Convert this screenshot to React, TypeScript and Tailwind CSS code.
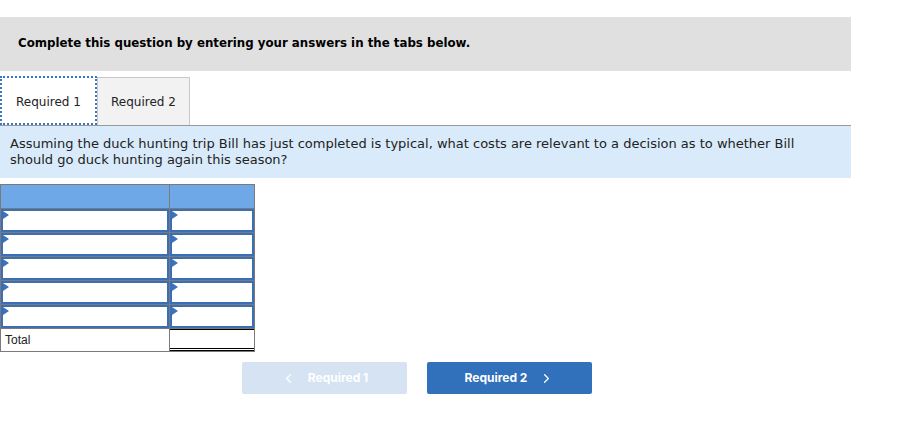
import { ChevronLeft, ChevronRight } from 'lucide-react';

const verdana = "font-['Verdana','DejaVu_Sans',sans-serif]";

function Marker() {
  return (
    <span className="absolute left-0 top-0 h-0 w-0 border-y-[4px] border-l-[6px] border-y-transparent border-l-[#3a72bd]" />
  );
}

function InputCell({ wide }: { wide?: boolean }) {
  return (
    <td className={`border border-[#7a7a7a] p-0 ${wide ? 'w-[169px]' : 'w-[85px]'}`}>
      <div className="relative h-[23px] border-2 border-[#3a6fb8] bg-white">
        <Marker />
      </div>
    </td>
  );
}

export default function App() {
  return (
    <div className="h-[445px] w-[916px] bg-white pt-[17px]">
      <div className="flex h-[54px] w-[851px] items-center bg-[#e0e0e0] pl-[18px]">
        <span className={`${verdana} text-[11.8px] font-bold text-black`}>
          Complete this question by entering your answers in the tabs below.
        </span>
      </div>

      <div className="mt-[6px] flex h-[48px] items-end">
        <div className={`${verdana} z-10 flex h-[49px] w-[97px] items-center justify-center border-2 border-dotted border-[#3b76c4] bg-white pt-[2px] text-[12px] text-[#222]`}>
          Required 1
        </div>
        <div className={`${verdana} flex h-[48px] w-[93px] items-center justify-center border border-b-0 border-[#c8c8c8] bg-[#f2f2f2] text-[12px] text-[#222]`}>
          Required 2
        </div>
      </div>

      <div className={`${verdana} w-[851px] border-t border-[#9a9a9a] bg-[#d9ebfa] px-[10px] pb-[10px] pt-[10px] text-[13px] leading-[16px] text-[#222]`}>
        Assuming the duck hunting trip Bill has just completed is typical, what costs are relevant to a decision as to whether Bill should go duck hunting again this season?
      </div>

      <table className="mt-[6px] border-collapse">
        <tbody>
          <tr className="h-[24px]">
            <td className="w-[169px] border border-[#7a7a7a] bg-[#6fa8e6] p-0" />
            <td className="w-[85px] border border-[#7a7a7a] bg-[#6fa8e6] p-0" />
          </tr>
          {[0, 1, 2, 3, 4].map((i) => (
            <tr key={i}>
              <InputCell wide />
              <InputCell />
            </tr>
          ))}
          <tr>
            <td className="h-[23px] border border-[#7a7a7a] px-[4px] py-0 font-['Liberation_Sans',Arial,sans-serif] text-[12px] text-[#222]">
              Total
            </td>
            <td className="border border-[#7a7a7a] p-0">
              <div className="h-[22px] border-t border-b-[3px] border-double border-black bg-white" />
            </td>
          </tr>
        </tbody>
      </table>

      <div className="mt-[10px] flex gap-[20px] pl-[242px]">
        <button className="flex h-[32px] w-[165px] items-center justify-center gap-[12px] rounded-[2px] bg-[#d6e3f3] font-['Inter',sans-serif] text-[12px] font-bold text-white">
          <ChevronLeft size={15} strokeWidth={2} />
          <span>Required 1</span>
        </button>
        <button className="flex h-[32px] w-[165px] items-center justify-center gap-[12px] rounded-[2px] bg-[#3170bb] font-['Inter',sans-serif] text-[12px] font-bold text-white">
          <span>Required 2</span>
          <ChevronRight size={15} strokeWidth={2} />
        </button>
      </div>
    </div>
  );
}
